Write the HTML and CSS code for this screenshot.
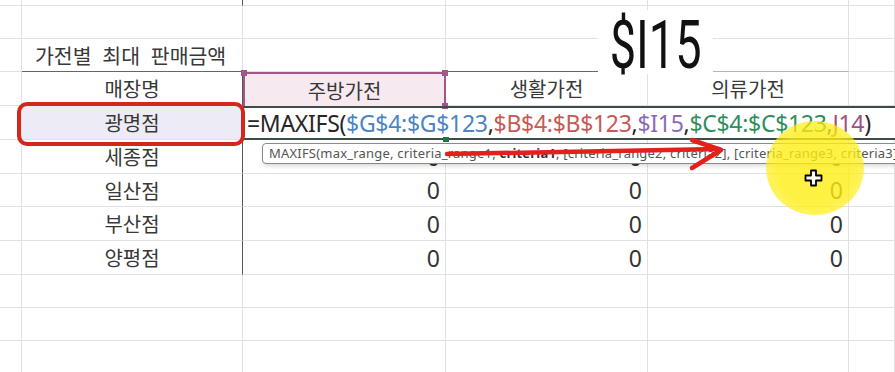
FILE: index.html
```html
<!DOCTYPE html>
<html lang="ko">
<head>
    <meta charset="UTF-8">
    <meta name="viewport" content="width=device-width, initial-scale=1.0">
    <title>가전별 최대 판매금액</title>
    <link rel="stylesheet" href="styles.css">
</head>

<body>
    <div class="sheet">
        <div class="grid">
            <!-- row 0 (cut off at the top) -->
            <div class="cell"></div>
            <div class="cell name dark-right cut">판매량</div>
            <div class="cell"></div>
            <div class="cell"></div>
            <div class="cell"></div>
            <div class="cell"></div>

            <!-- row 1 -->
            <div class="cell"></div>
            <div class="cell"></div>
            <div class="cell"></div>
            <div class="cell"></div>
            <div class="cell"></div>
            <div class="cell"></div>

            <!-- row 2 : title -->
            <div class="cell"></div>
            <div class="cell title dark-bottom">가전별 최대 판매금액</div>
            <div class="cell"></div>
            <div class="cell dark-bottom"></div>
            <div class="cell mid-bottom"></div>
            <div class="cell"></div>

            <!-- row 3 : header -->
            <div class="cell"></div>
            <div class="cell name dark-right">매장명</div>
            <div class="cell name sel">
                주방가전
                <span class="handle tl"></span>
                <span class="handle tr"></span>
                <span class="handle br"></span>
            </div>
            <div class="cell name">생활가전</div>
            <div class="cell name">의류가전</div>
            <div class="cell"></div>

            <!-- row 4 : editing -->
            <div class="cell"></div>
            <div class="cell name dark-right picked">광명점</div>
            <div class="cell formula">
                <span class="fx">=MAXIFS(</span><span class="ref-blue">$G$4:$G$123</span><span class="fx">,</span><span class="ref-red">$B$4:$B$123</span><span class="fx">,</span><span class="ref-purple">$I15</span><span class="fx">,</span><span class="ref-green">$C$4:$C$123</span><span class="fx">,</span><span class="ref-mauve">J14</span><span class="fx">)</span>
                <span class="fill-handle"></span>
            </div>

            <!-- rows 5-8 -->
            <div class="cell"></div>
            <div class="cell name dark-right">세종점</div>
            <div class="cell num">0</div>
            <div class="cell num">0</div>
            <div class="cell num">0</div>
            <div class="cell"></div>

            <div class="cell"></div>
            <div class="cell name dark-right">일산점</div>
            <div class="cell num">0</div>
            <div class="cell num">0</div>
            <div class="cell num">0</div>
            <div class="cell"></div>

            <div class="cell"></div>
            <div class="cell name dark-right">부산점</div>
            <div class="cell num">0</div>
            <div class="cell num">0</div>
            <div class="cell num">0</div>
            <div class="cell"></div>

            <div class="cell"></div>
            <div class="cell name dark-right">양평점</div>
            <div class="cell num">0</div>
            <div class="cell num">0</div>
            <div class="cell num">0</div>
            <div class="cell"></div>

            <!-- empty rows -->
            <div class="cell"></div><div class="cell"></div><div class="cell"></div>
            <div class="cell"></div><div class="cell"></div><div class="cell"></div>
            <div class="cell"></div><div class="cell"></div><div class="cell"></div>
            <div class="cell"></div><div class="cell"></div><div class="cell"></div>
            <div class="cell"></div><div class="cell"></div><div class="cell"></div>
            <div class="cell"></div><div class="cell"></div><div class="cell"></div>
        </div>

        <!-- overlays -->
        <div class="ref-label"><span>$I15</span></div>
        <div class="red-box"></div>
        <div class="tooltip">MAXIFS(max_range, criteria_range1, <b>criteria1</b>, [criteria_range2, criteria2], [criteria_range3, criteria3], ...)</div>
        <svg class="arrow" width="300" height="40" viewBox="440 135 300 40">
            <path d="M447 154 L719 149" />
            <path d="M692 140 L721 150 L692 168" />
        </svg>
        <div class="spotlight"></div>
        <svg class="cursor" width="20" height="18" viewBox="0 0 20 18">
            <path d="M7 1.5 h5 v5 h5.5 v5 h-5.5 v5 h-5 v-5 h-5.5 v-5 h5.5 z" />
        </svg>
    </div>
</body>
</html>
```

FILE: styles.css
```css
*{
    margin:0;
    padding:0;
    box-sizing: border-box;
}
body{
    font-family: "Noto Sans", "Noto Sans CJK KR", sans-serif;
    color: #333;
    background-color: #fff;
    overflow: hidden;
}
.sheet{
    position: relative;
    width: 895px;
    height: 372px;
    overflow: hidden;
}
.grid{
    display: grid;
    grid-template-columns: 22px 221px 203px 202px 201px 1fr;
    grid-template-rows: 34px 33px 33px 34px 34px 34px 33px 34px 34px 33px 33px 33px;
    margin-top: -28px;
}
.cell{
    border-right: 1px solid #e1e1e1;
    border-bottom: 1px solid #e1e1e1;
    display: flex;
    align-items: center;
    white-space: nowrap;
}
.name{
    justify-content: center;
    font-family: "Noto Sans CJK KR", sans-serif;
    font-size: 20px;
    color: #383838;
}
.title{
    font-family: "Noto Sans CJK KR", sans-serif;
    font-size: 20.5px;
    color: #383838;
    padding-left: 13px;
    word-spacing: 5px;
    overflow: visible;
}
.cut{
    align-items: flex-end;
    padding-bottom: 3px;
}
.num{
    justify-content: flex-end;
    padding-right: 5px;
    font-size: 23px;
    color: #333;
}
.dark-right{
    border-right: 1px solid #555;
}
.dark-bottom{
    border-bottom: 1px solid #666;
}
.mid-bottom{
    border-bottom: 1px solid #b5b5b5;
}

/* selected header range */
.sel{
    position: relative;
    background-color: #f6e9f0;
    border: 2px solid #a3568a;
    border-bottom: none;
}
.handle{
    position: absolute;
    width: 6px;
    height: 6px;
    background-color: #a3568a;
}
.handle.tl{ left: -4px; top: -4px; }
.handle.tr{ right: -4px; top: -4px; }
.handle.br{ right: -4px; bottom: -3px; }

/* cell being edited */
.picked{
    background-color: #edebf5;
}
.formula{
    grid-column: span 4;
    position: relative;
    border-top: 2px solid #3d4d43;
    border-bottom: 2px solid #3d4d43;
    border-right: none;
    padding-left: 4px;
    font-size: 23px;
    letter-spacing: -0.3px;
    overflow: visible;
}
.fx{ color: #262626; }
.ref-blue{ color: #4c84c4; }
.ref-red{ color: #c85a55; }
.ref-purple{ color: #8a6bb8; }
.ref-green{ color: #2f8e5c; }
.ref-mauve{ color: #a04f82; }
.fill-handle{
    position: absolute;
    left: 200px;
    bottom: -4px;
    width: 6px;
    height: 5px;
    background-color: #217346;
}

/* overlays */
.ref-label{
    position: absolute;
    left: 598px;
    top: 10px;
    width: 115px;
    height: 64px;
    padding-top: 6px;
    background-color: #fff;
    display: flex;
    align-items: center;
    justify-content: center;
    font-family: "Roboto", sans-serif;
    font-size: 67px;
    color: #111;
    line-height: 1;
}
.ref-label span{
    display: inline-block;
    transform: scaleX(0.7);
}
.red-box{
    position: absolute;
    left: 17px;
    top: 102px;
    width: 228px;
    height: 44px;
    border: 4px solid #d3271c;
    border-radius: 10px;
}
.tooltip{
    position: absolute;
    left: 262px;
    top: 143px;
    width: 700px;
    height: 21px;
    padding-left: 6px;
    background-color: #fff;
    border: 1px solid #8a8a8a;
    border-radius: 4px;
    box-shadow: 1px 2px 4px rgba(0,0,0,0.15);
    font-family: "Noto Sans", sans-serif;
    font-size: 13px;
    letter-spacing: 0.2px;
    line-height: 19px;
    color: #555;
    white-space: nowrap;
}
.tooltip b{
    color: #333;
}
.arrow{
    position: absolute;
    left: 440px;
    top: 135px;
}
.arrow path{
    fill: none;
    stroke: #e3211a;
    stroke-width: 4.5;
    stroke-linecap: round;
    stroke-linejoin: round;
}
.spotlight{
    position: absolute;
    left: 766px;
    top: 121px;
    width: 98px;
    height: 94px;
    border-radius: 50%;
    background: radial-gradient(circle, rgba(255,238,20,0.8) 55%, rgba(255,238,20,0.6) 80%, rgba(255,238,20,0) 100%);
}
.cursor{
    position: absolute;
    left: 804px;
    top: 169px;
}
.cursor path{
    fill: #fff;
    stroke: #000;
    stroke-width: 1.8;
    stroke-linejoin: round;
}
```
